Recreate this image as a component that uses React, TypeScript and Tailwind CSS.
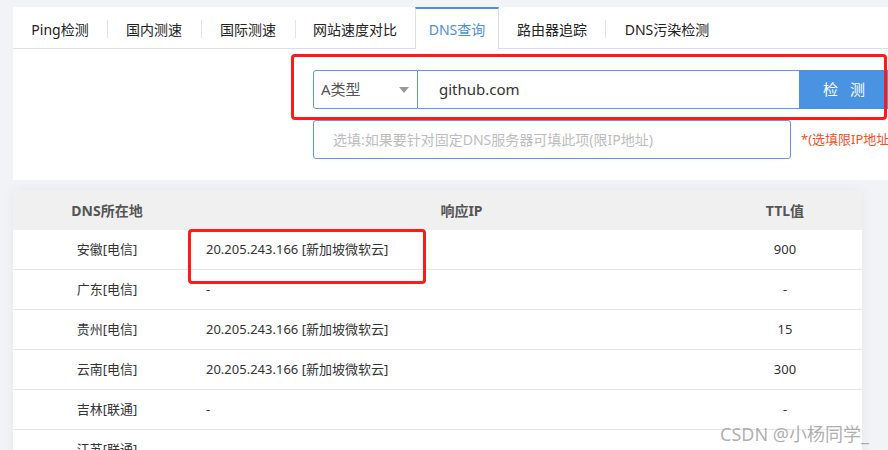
const font = 'font-["Noto_Sans","Noto_Sans_CJK_SC",sans-serif]';

const tabs = [
  { label: 'Ping检测', w: 'w-[94px]' },
  { label: '国内测速', w: 'w-[94px]' },
  { label: '国际测速', w: 'w-[94px]' },
  { label: '网站速度对比', w: 'w-[120px]' },
  { label: 'DNS查询', w: 'w-[84px]', active: true },
  { label: '路由器追踪', w: 'w-[106px]' },
  { label: 'DNS污染检测', w: 'w-[124px]' },
];

const rows = [
  { loc: '安徽[电信]', ip: '20.205.243.166 [新加坡微软云]', ttl: '900' },
  { loc: '广东[电信]', ip: '-', ttl: '-' },
  { loc: '贵州[电信]', ip: '20.205.243.166 [新加坡微软云]', ttl: '15' },
  { loc: '云南[电信]', ip: '20.205.243.166 [新加坡微软云]', ttl: '300' },
  { loc: '吉林[联通]', ip: '-', ttl: '-' },
  { loc: '江苏[联通]', ip: '', ttl: '' },
];

function Tabs() {
  return (
    <div className="flex h-[42px] border-b border-[#dcdfe6]">
      {tabs.map((t, i) => {
        const prev = tabs[i - 1];
        const sep = i > 0 && !t.active && !prev?.active;
        if (t.active) {
          return (
            <div
              key={t.label}
              className={`${t.w} -mb-px flex shrink-0 items-center justify-center border-t-2 border-x border-t-[#4a90e2] border-x-[#dcdfe6] bg-white pt-[1px] text-[14px] text-[#4a90e2]`}
            >
              {t.label}
            </div>
          );
        }
        return (
          <div key={t.label} className={`${t.w} relative flex shrink-0 items-center justify-center pt-[3px] text-[14px] text-[#222]`}>
            {sep && <span className="absolute left-0 top-[13px] h-[18px] w-px bg-[#e4e4e4]" />}
            {t.label}
          </div>
        );
      })}
    </div>
  );
}

function QueryForm() {
  return (
    <div className="pl-[300px] pt-[21px]">
      <div className="flex h-[39px]">
        <div className="flex w-[105px] shrink-0 items-center justify-between rounded-l-[3px] border border-[#5a9be6] px-[7px] text-[15px] text-[#555]">
          <span>A类型</span>
          <svg width="10" height="6" viewBox="0 0 10 6" className="mr-[1px]">
            <path d="M0 0h10L5 6z" fill="#999" />
          </svg>
        </div>
        <div className="flex w-[381px] shrink-0 items-center border-y border-[#5a9be6] pl-[21px] text-[15px] text-[#333]">
          github.com
        </div>
        <div className="flex w-[100px] shrink-0 items-center bg-[#4a93e3] pl-[24px] text-[15px] tracking-[12px] text-white">
          检测
        </div>
      </div>
      <div className="mt-[11px] flex h-[39px] items-center">
        <div className="flex h-full w-[478px] shrink-0 items-center rounded-[3px] border border-[#5a9be6] pl-[19px] text-[14px] text-[#bdbdbd]">
          选填:如果要针对固定DNS服务器可填此项(限IP地址)
        </div>
        <span className="ml-[10px] shrink-0 whitespace-nowrap text-[13px] text-[#f4511e]">*(选填限IP地址)</span>
      </div>
    </div>
  );
}

function ResultTable() {
  return (
    <div className="mt-[10px] w-[849px] bg-white shadow-[0_0_12px_rgba(0,0,0,0.05)]">
      <div className="flex h-[40px] items-center bg-[#f0f0f0] text-[14px] font-bold text-[#555]">
        <div className="w-[188px] text-center">DNS所在地</div>
        <div className="w-[507px] pl-[14px] text-center">响应IP</div>
        <div className="w-[154px] text-center">TTL值</div>
      </div>
      {rows.map((r) => (
        <div key={r.loc} className="flex h-[40px] items-center border-b border-[#e6e6e6] text-[13px] text-[#333]">
          <div className="w-[188px] text-center">{r.loc}</div>
          <div className="w-[507px] pl-[5px]">{r.ip}</div>
          <div className="w-[154px] text-center">{r.ttl}</div>
        </div>
      ))}
    </div>
  );
}

export default function App() {
  return (
    <div className={`${font} relative h-[450px] w-[888px] overflow-hidden bg-[#f1f3f6] pl-[13px] pt-[7px]`}>
      <div className="h-[173px] overflow-hidden bg-white">
        <Tabs />
        <QueryForm />
      </div>
      <ResultTable />

      {/* annotation boxes */}
      <div className="absolute left-[291px] top-[54px] h-[66px] w-[596px] rounded-[4px] border-[3px] border-[#ff1a1a]" />
      <div className="absolute left-[188px] top-[229px] h-[55px] w-[238px] rounded-[4px] border-[3px] border-[#ff1a1a]" />

      <div className="absolute left-[720px] top-[421px] text-[18px] text-[#9a9a9a]/80">CSDN @小杨同学_</div>
    </div>
  );
}
